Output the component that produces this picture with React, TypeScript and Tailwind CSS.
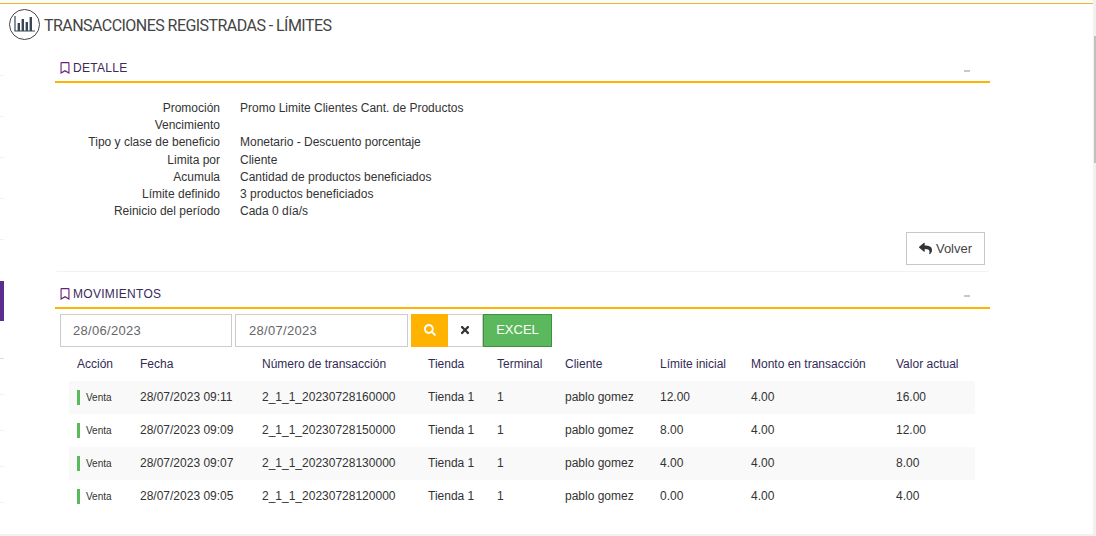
import { FaRegBookmark, FaReply, FaSearch, FaTimes } from "react-icons/fa";

const detalle = [
  ["Promoción", "Promo Limite Clientes Cant. de Productos"],
  ["Vencimiento", ""],
  ["Tipo y clase de beneficio", "Monetario - Descuento porcentaje"],
  ["Limita por", "Cliente"],
  ["Acumula", "Cantidad de productos beneficiados"],
  ["Límite definido", "3 productos beneficiados"],
  ["Reinicio del período", "Cada 0 día/s"],
];

const columnas = [
  { label: "Acción", w: "w-[63px]" },
  { label: "Fecha", w: "w-[122px]" },
  { label: "Número de transacción", w: "w-[166px]" },
  { label: "Tienda", w: "w-[69px]" },
  { label: "Terminal", w: "w-[68px]" },
  { label: "Cliente", w: "w-[95px]" },
  { label: "Límite inicial", w: "w-[91px]" },
  { label: "Monto en transacción", w: "w-[145px]" },
  { label: "Valor actual", w: "w-[79px]" },
];

const movimientos = [
  ["28/07/2023 09:11", "2_1_1_20230728160000", "12.00", "16.00"],
  ["28/07/2023 09:09", "2_1_1_20230728150000", "8.00", "12.00"],
  ["28/07/2023 09:07", "2_1_1_20230728130000", "4.00", "8.00"],
  ["28/07/2023 09:05", "2_1_1_20230728120000", "0.00", "4.00"],
];

// Section header with bookmark icon and collapse dash
function SectionHeader({ title }: { title: string }) {
  return (
    <div className="flex h-[28px] w-[935px] items-center justify-between border-b-2 border-[#ffb300] pl-[4px] pr-[20px]">
      <div className="flex items-center gap-[2px] text-[12px] leading-none tracking-[0.3px] text-[#3a2a5c]">
        <FaRegBookmark className="text-[12px] text-[#6b1f7a]" />
        <span>{title}</span>
      </div>
      <div className="mt-[5px] h-[2px] w-[6px] bg-[#c8c8c8]" />
    </div>
  );
}

// Collapsed side menu: only the edge of each item is visible
function SideStrip() {
  return (
    <div className="flex w-[4px] shrink-0 flex-col">
      <div className="h-[72px] border-b border-[#f2f2f2]" />
      <div className="h-[41px] border-b border-[#f2f2f2]" />
      <div className="h-[41px] border-b border-[#f2f2f2]" />
      <div className="h-[41px] border-b border-[#f2f2f2]" />
      <div className="h-[41px] border-b border-[#f2f2f2]" />
      <div className="h-[41px]" />
      <div className="h-[40px] bg-[#5c2d91]" />
      <div className="h-[38px] border-b border-[#dddddd]" />
      <div className="h-[36px] border-b border-[#f2f2f2]" />
      <div className="h-[36px] border-b border-[#f2f2f2]" />
      <div className="h-[36px] border-b border-[#f2f2f2]" />
      <div className="h-[36px] border-b border-[#f2f2f2]" />
    </div>
  );
}

export default function App() {
  return (
    <div className="flex h-[536px] w-[1096px] flex-col overflow-hidden bg-white font-['Liberation_Sans',sans-serif] text-[12px] text-[#333333]">
      <div className="flex min-h-0 flex-1">
        <div className="flex w-[1093px] flex-col">
          <div className="h-[4px] shrink-0 border-b border-[#f0b429] bg-[#fafafa]" />
          <div className="flex flex-1">
            <SideStrip />

            <div className="flex-1">
              {/* Page title */}
              <div className="flex h-[47px] items-start pl-[5px] pt-[5px]">
                <div className="flex h-[31px] w-[31px] items-center justify-center rounded-full border border-[#444444]">
                  <svg width="29" height="29" viewBox="0 0 29 29" fill="none">
                    <path d="M5 6v15h20" stroke="#3b4654" strokeWidth="1.2" />
                    <path d="M8.8 13v8M12.8 9v12M16.8 12v9M20.8 7v14" stroke="#3b4654" strokeWidth="2.4" />
                  </svg>
                </div>
                <h1 className="ml-[4px] mt-[5px] font-['Roboto',sans-serif] text-[16px] font-normal leading-[24px] tracking-[-0.55px] text-[#444444]">
                  TRANSACCIONES REGISTRADAS - LÍMITES
                </h1>
              </div>

              <div className="ml-[51px] w-[935px]">
                <div className="pt-[4px]">
                  <SectionHeader title="DETALLE" />
                </div>

                {/* Detalle */}
                <div className="pt-[16px]">
                  {detalle.map(([label, value]) => (
                    <div key={label} className="flex h-[17.3px] items-center leading-none">
                      <div className="w-[165px] text-right">{label}</div>
                      <div className="ml-[20px]">{value}</div>
                    </div>
                  ))}
                </div>

                <div className="flex h-[51.7px] items-end justify-end rounded-b-[4px] border-b border-[#f2f2f2] pb-[6px] pr-[5px]">
                  <button className="flex h-[33px] w-[79px] items-center justify-center gap-[4px] border border-[#c8c8c8] bg-white text-[13px] text-[#444444]">
                    <FaReply className="text-[13px] text-[#333333]" />
                    Volver
                  </button>
                </div>

                <div className="pt-[9px]">
                  <SectionHeader title="MOVIMIENTOS" />
                </div>

                {/* Filtros */}
                <div className="flex pl-[5px] pt-[5px]">
                  <div className="flex h-[33px] w-[172px] items-center border border-[#cccccc] pl-[12px] pt-[1px] text-[13px] tracking-[0.3px] text-[#666666]">
                    28/06/2023
                  </div>
                  <div className="ml-[3px] flex h-[33px] w-[173px] items-center border border-[#cccccc] pl-[13px] pt-[1px] text-[13px] tracking-[0.3px] text-[#666666]">
                    28/07/2023
                  </div>
                  <button className="ml-[3px] flex h-[33px] w-[37px] items-center justify-center bg-[#ffb300]">
                    <FaSearch className="text-[12px] text-white" />
                  </button>
                  <button className="flex h-[33px] w-[35px] items-center justify-center border border-l-0 border-[#cccccc] bg-white">
                    <FaTimes className="text-[12px] text-[#333333]" />
                  </button>
                  <button className="flex h-[33px] w-[69px] items-center justify-center border border-[#3f9142] bg-[#5cb85c] pb-[2px] text-[13px] text-white">
                    EXCEL
                  </button>
                </div>

                {/* Tabla */}
                <div className="ml-[14px] w-[906px]">
                  <div className="flex h-[34px] items-center pl-[8px] text-[#332b55]">
                    {columnas.map((c) => (
                      <div key={c.label} className={c.w}>
                        {c.label}
                      </div>
                    ))}
                  </div>
                  {movimientos.map(([fecha, numero, limite, valor], i) => (
                    <div
                      key={numero}
                      className={`flex h-[33px] items-center pl-[8px] ${i % 2 === 0 ? "bg-[#f9f9f9]" : "bg-white"}`}
                    >
                      <div className="flex w-[63px] items-center">
                        <div className="h-[15px] w-[3px] bg-[#5cb85c]" />
                        <span className="ml-[6px] text-[10px]">Venta</span>
                      </div>
                      <div className="w-[122px]">{fecha}</div>
                      <div className="w-[166px]">{numero}</div>
                      <div className="w-[69px]">Tienda 1</div>
                      <div className="w-[68px]">1</div>
                      <div className="w-[95px]">pablo gomez</div>
                      <div className="w-[91px]">{limite}</div>
                      <div className="w-[145px]">4.00</div>
                      <div className="w-[79px]">{valor}</div>
                    </div>
                  ))}
                </div>
              </div>
            </div>
          </div>
        </div>

        {/* Scrollbar */}
        <div className="flex w-[3px] justify-end bg-[#f1f1f1] pt-[36px]">
          <div className="h-[127px] w-[2px] bg-[#c1c1c1]" />
        </div>
      </div>
      <div className="h-[2px] shrink-0 bg-[#f1f1f1]" />
    </div>
  );
}
